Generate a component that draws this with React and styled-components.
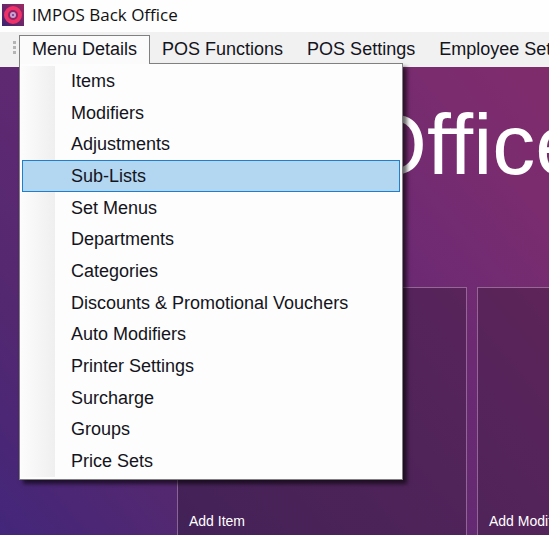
import { useState } from "react";
import styled, { createGlobalStyle } from "styled-components";

const GlobalStyle = createGlobalStyle`
  * {
    box-sizing: border-box;
  }

  body {
    margin: 0;
    font-family: "Liberation Sans", Arial, sans-serif;
  }
`;

const Window = styled.div`
  display: flex;
  flex-direction: column;
  height: 100vh;
  overflow: hidden;
`;

const TitleBar = styled.header`
  display: flex;
  align-items: center;
  gap: 8px;
  height: 32px;
  padding: 0 2px 3px;
  flex-shrink: 0;
  background-color: #fefefe;
  color: #111;
  font-family: "Open Sans", "Segoe UI", sans-serif;
  font-size: 17px;
  white-space: nowrap;
`;

const MenuBar = styled.nav`
  display: flex;
  height: 35px;
  padding: 3px 0 3px 12px;
  flex-shrink: 0;
  background-color: #f1f1f1;
`;

const Grip = styled.div`
  width: 7px;
  padding-top: 5px;
  flex-shrink: 0;
  color: #b4b4b4;
`;

const MenuGroup = styled.div`
  position: relative;
  display: flex;
  flex-shrink: 0;
`;

const MenuButton = styled.button`
  position: relative;
  z-index: ${({ $open }) => ($open ? 2 : 0)};
  padding: ${({ $open }) => ($open ? "0 12px 2px" : "0 11px 2px")};
  border: 1px solid ${({ $open }) => ($open ? "#808080" : "transparent")};
  border-bottom: none;
  background-color: ${({ $open }) => ($open ? "#fbfbfb" : "transparent")};
  color: #14141c;
  font-family: inherit;
  font-size: 18px;
  line-height: 24px;
  white-space: nowrap;
`;

const DropDown = styled.div`
  position: absolute;
  top: 28px;
  left: 0;
  z-index: 1;
  display: grid;
  grid-auto-rows: 1fr;
  width: 384px;
  min-height: 417px;
  padding: 1px 2px 2px;
  border: 1px solid #808080;
  background: linear-gradient(to right, #fcfcfc, #efefef) 1px 2px / 34px
    calc(100% - 4px) no-repeat #fdfdfd;
  box-shadow: 4px 4px 4px rgba(0, 0, 0, 0.6);
`;

const DropDownItem = styled.button`
  padding: 0 48px;
  border: 1px solid ${({ $active }) => ($active ? "#1f7fcf" : "transparent")};
  background-color: ${({ $active }) => ($active ? "#b3d6f1" : "transparent")};
  color: #14141c;
  font-family: inherit;
  font-size: 18px;
  line-height: 28px;
  text-align: left;
  white-space: nowrap;
`;

const Desktop = styled.main`
  flex: 1;
  min-height: 0;
  overflow: hidden;
  background: linear-gradient(
    50deg,
    #43267a 0%,
    #542870 22%,
    #6c2a73 66%,
    #7a2c6f 86%,
    #802c6b 100%
  );
`;

const Heading = styled.h1`
  margin: 0;
  padding: 29px 0 0 360px;
  color: #fff;
  font-size: 86px;
  font-weight: normal;
  line-height: 96px;
  white-space: nowrap;
`;

const Tiles = styled.div`
  display: grid;
  grid-template-columns: repeat(2, 290px);
  gap: 10px;
  padding: 95px 0 0 177px;
`;

const Tile = styled.button`
  display: flex;
  align-items: flex-end;
  height: 255px;
  padding: 12px 11px;
  border: 1px solid rgba(210, 170, 210, 0.5);
  background-color: rgba(24, 20, 20, 0.26);
  color: #fff;
  font-family: inherit;
  font-size: 14px;
  line-height: 16px;
`;

const menus = [
  {
    title: "Menu Details",
    items: [
      "Items",
      "Modifiers",
      "Adjustments",
      "Sub-Lists",
      "Set Menus",
      "Departments",
      "Categories",
      "Discounts & Promotional Vouchers",
      "Auto Modifiers",
      "Printer Settings",
      "Surcharge",
      "Groups",
      "Price Sets",
    ],
  },
  { title: "POS Functions", items: [] },
  { title: "POS Settings", items: [] },
  { title: "Employee Settings", items: [] },
];

const AppIcon = () => (
  <svg width="22" height="22" viewBox="0 0 22 22" aria-hidden="true">
    <defs>
      <linearGradient id="iconBack" x1="0" y1="1" x2="1" y2="0">
        <stop offset="0" stopColor="#3a2470" />
        <stop offset="1" stopColor="#9c2a62" />
      </linearGradient>
    </defs>
    <rect width="22" height="22" fill="url(#iconBack)" />
    <circle
      cx="11"
      cy="11"
      r="7"
      fill="#8f2467"
      stroke="#ee3168"
      strokeWidth="4"
    />
    <circle cx="11" cy="11" r="3" fill="#c9a3cf" />
    <rect x="10" y="10" width="2" height="2" fill="#8a4c9c" />
  </svg>
);

const GripDots = () => (
  <svg width="5" height="16" viewBox="0 0 5 16" aria-hidden="true">
    {[1, 6, 11].map((y) => (
      <rect key={y} x="1" y={y} width="3" height="3" fill="currentColor" />
    ))}
  </svg>
);

export default function App() {
  const [openMenu, setOpenMenu] = useState("Menu Details");
  const [activeItem, setActiveItem] = useState("Sub-Lists");

  const toggleMenu = (title) => {
    setOpenMenu(openMenu === title ? null : title);
  };

  return (
    <Window>
      <GlobalStyle />
      <TitleBar>
        <AppIcon />
        IMPOS Back Office
      </TitleBar>
      <MenuBar>
        <Grip>
          <GripDots />
        </Grip>
        {menus.map(({ title, items }) => (
          <MenuGroup key={title}>
            <MenuButton
              $open={openMenu === title}
              aria-expanded={openMenu === title}
              onClick={() => toggleMenu(title)}
            >
              {title}
            </MenuButton>
            {openMenu === title && items.length > 0 && (
              <DropDown role="menu">
                {items.map((item) => (
                  <DropDownItem
                    key={item}
                    role="menuitem"
                    $active={activeItem === item}
                    onMouseEnter={() => setActiveItem(item)}
                  >
                    {item}
                  </DropDownItem>
                ))}
              </DropDown>
            )}
          </MenuGroup>
        ))}
      </MenuBar>
      <Desktop>
        <Heading>Office</Heading>
        <Tiles>
          <Tile>Add Item</Tile>
          <Tile>Add Modifier</Tile>
        </Tiles>
      </Desktop>
    </Window>
  );
}
